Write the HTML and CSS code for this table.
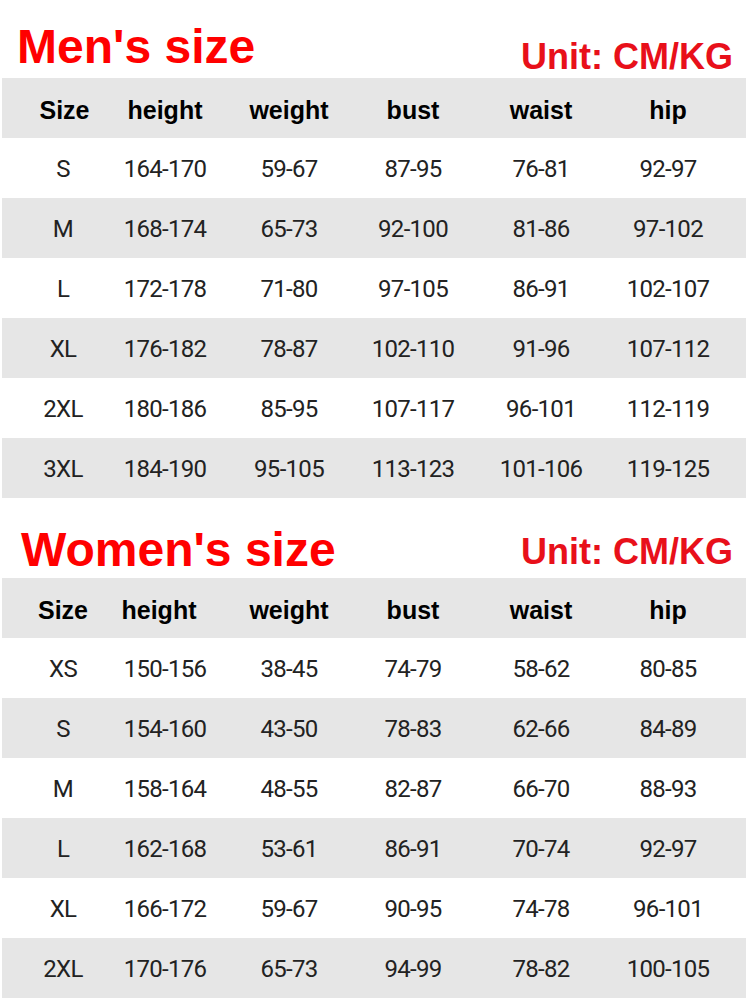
FILE: index.html
```html
<!DOCTYPE html>
<html lang="en">
<head>
<meta charset="utf-8">
<title>Size chart</title>
<link rel="stylesheet" href="styles.css">
</head>
<body>
<section class="chart chart-men">
  <div class="title-row">
    <h1 class="title">Men's size</h1>
    <div class="unit">Unit: CM/KG</div>
  </div>
  <div class="table">
    <div class="row head"><span>Size</span><span>height</span><span>weight</span><span>bust</span><span>waist</span><span>hip</span></div>
    <div class="row"><span>S</span><span>164-170</span><span>59-67</span><span>87-95</span><span>76-81</span><span>92-97</span></div>
    <div class="row alt"><span>M</span><span>168-174</span><span>65-73</span><span>92-100</span><span>81-86</span><span>97-102</span></div>
    <div class="row"><span>L</span><span>172-178</span><span>71-80</span><span>97-105</span><span>86-91</span><span>102-107</span></div>
    <div class="row alt"><span>XL</span><span>176-182</span><span>78-87</span><span>102-110</span><span>91-96</span><span>107-112</span></div>
    <div class="row"><span>2XL</span><span>180-186</span><span>85-95</span><span>107-117</span><span>96-101</span><span>112-119</span></div>
    <div class="row alt"><span>3XL</span><span>184-190</span><span>95-105</span><span>113-123</span><span>101-106</span><span>119-125</span></div>
  </div>
</section>
<section class="chart chart-women">
  <div class="title-row">
    <h1 class="title">Women's size</h1>
    <div class="unit">Unit: CM/KG</div>
  </div>
  <div class="table">
    <div class="row head"><span>Size</span><span class="shift">height</span><span>weight</span><span>bust</span><span>waist</span><span>hip</span></div>
    <div class="row"><span>XS</span><span>150-156</span><span>38-45</span><span>74-79</span><span>58-62</span><span>80-85</span></div>
    <div class="row alt"><span>S</span><span>154-160</span><span>43-50</span><span>78-83</span><span>62-66</span><span>84-89</span></div>
    <div class="row"><span>M</span><span>158-164</span><span>48-55</span><span>82-87</span><span>66-70</span><span>88-93</span></div>
    <div class="row alt"><span>L</span><span>162-168</span><span>53-61</span><span>86-91</span><span>70-74</span><span>92-97</span></div>
    <div class="row"><span>XL</span><span>166-172</span><span>59-67</span><span>90-95</span><span>74-78</span><span>96-101</span></div>
    <div class="row alt"><span>2XL</span><span>170-176</span><span>65-73</span><span>94-99</span><span>78-82</span><span>100-105</span></div>
  </div>
</section>
</body>
</html>
```
FILE: styles.css
```css
html, body {
  margin: 0;
  padding: 0;
  background: #ffffff;
}

body {
  width: 750px;
  font-family: "Liberation Sans", Arial, sans-serif;
}

.title-row {
  display: flex;
  justify-content: space-between;
  align-items: flex-start;
  padding: 0 17px 0 17px;
}

.chart-men .title-row {
  height: 78px;
}

.chart-women .title-row {
  height: 80px;
  padding-left: 21px;
}

.title {
  margin: 0;
  font-family: "Liberation Sans", Arial, sans-serif;
  font-weight: 700;
  font-size: 48px;
  line-height: 1;
  color: #ff0000;
}

.unit {
  font-weight: 700;
  font-size: 36px;
  line-height: 1;
  color: #e8101a;
}

.chart-men .title { margin-top: 23px; }
.chart-men .unit { margin-top: 39px; }
.chart-women .title { margin-top: 28px; }
.chart-women .unit { margin-top: 36px; }

.table {
  margin: 0 4px 0 2px;
}

.row {
  display: grid;
  grid-template-columns: 122px 82px 166px 82px 174px 80px;
  justify-items: center;
  align-items: center;
  height: 60px;
  padding-top: 2px;
  box-sizing: border-box;
  background: #ffffff;
  font-family: Roboto, "Noto Sans", sans-serif;
  font-size: 24px;
  letter-spacing: -0.7px;
  color: #222222;
}

.row span {
  white-space: nowrap;
}

.row.alt {
  background: #e6e6e6;
}

.row.head {
  background: #e6e6e6;
  font-family: "Liberation Sans", Arial, sans-serif;
  font-weight: 700;
  font-size: 25px;
  letter-spacing: 0;
  color: #000000;
  padding-top: 4px;
}

.chart-men .row.head span:first-child {
  margin-left: 3px;
}

.row.head .shift {
  margin-left: -12px;
}
```
